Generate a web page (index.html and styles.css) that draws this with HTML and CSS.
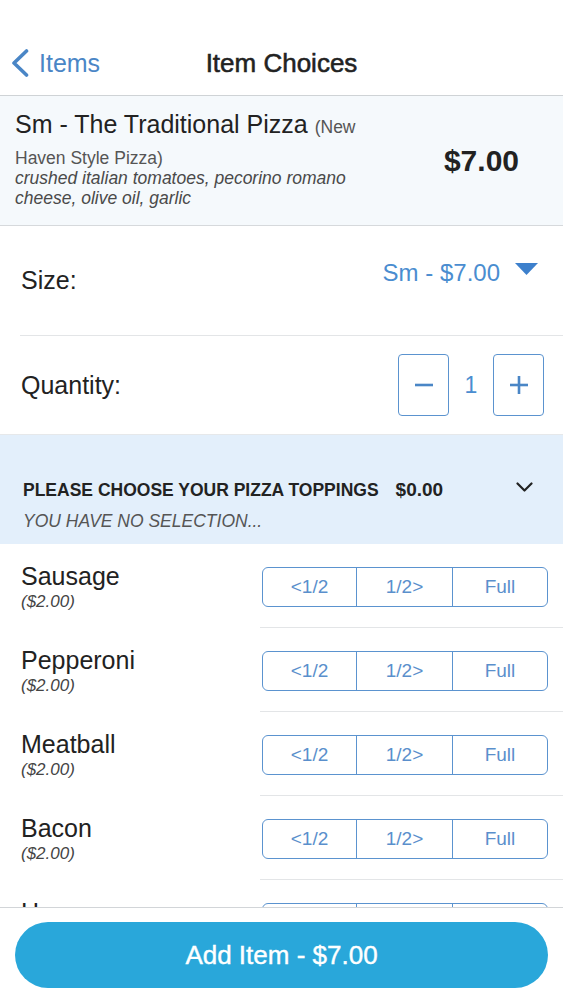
FILE: index.html
```html
<!DOCTYPE html>
<html lang="en">
<head>
<meta charset="utf-8">
<title>Item Choices</title>
<link rel="stylesheet" href="styles.css">
</head>
<body>
<div class="page">
  <header class="nav">
    <a class="back" href="#">
      <svg class="back-icon" width="18" height="28" viewBox="0 0 18 28"><polyline points="15.5,2 3,14 15.5,26" fill="none" stroke="#4a86c6" stroke-width="3.6" stroke-linecap="round" stroke-linejoin="round"/></svg>
      <span>Items</span>
    </a>
    <h1 class="nav-title">Item Choices</h1>
    <div></div>
  </header>

  <section class="item-info">
    <div class="item-text">
      <div class="item-title">Sm - The Traditional Pizza <span class="item-sub">(New Haven Style Pizza)</span></div>
      <div class="item-desc">crushed italian tomatoes, pecorino romano cheese, olive oil, garlic</div>
    </div>
    <div class="item-price">$7.00</div>
  </section>

  <section class="options">
    <div class="opt-row size-row">
      <div class="opt-label">Size:</div>
      <div class="dropdown">
        <span>Sm - $7.00</span>
        <svg class="caret" width="23" height="12" viewBox="0 0 23 12"><polygon points="0,0 23,0 11.5,12" fill="#3d80cc"/></svg>
      </div>
    </div>
    <div class="opt-row qty-row">
      <div class="opt-label">Quantity:</div>
      <div class="stepper">
        <button class="step-btn" type="button"><svg width="18" height="18" viewBox="0 0 18 18"><line x1="0" y1="9" x2="18" y2="9" stroke="#4a86c6" stroke-width="2.6"/></svg></button>
        <span class="qty">1</span>
        <button class="step-btn" type="button"><svg width="18" height="18" viewBox="0 0 18 18"><line x1="0" y1="9" x2="18" y2="9" stroke="#4a86c6" stroke-width="2.6"/><line x1="9" y1="0" x2="9" y2="18" stroke="#4a86c6" stroke-width="2.6"/></svg></button>
      </div>
    </div>
  </section>

  <section class="group-head">
    <div class="group-top">
      <span class="group-name">PLEASE CHOOSE YOUR PIZZA TOPPINGS</span>
      <span class="group-price">$0.00</span>
      <svg class="chev" width="17" height="10" viewBox="0 0 17 10"><polyline points="1.5,1.5 8.5,8.5 15.5,1.5" fill="none" stroke="#222" stroke-width="2.2" stroke-linecap="round" stroke-linejoin="round"/></svg>
    </div>
    <div class="group-note">YOU HAVE NO SELECTION...</div>
  </section>

  <section class="toppings">
    <div class="top-row">
      <div class="top-text"><div class="top-name">Sausage</div><div class="top-price">($2.00)</div></div>
      <div class="top-ctrl"><div class="seg"><span>&lt;1/2</span><span>1/2&gt;</span><span>Full</span></div></div>
    </div>
    <div class="top-row">
      <div class="top-text"><div class="top-name">Pepperoni</div><div class="top-price">($2.00)</div></div>
      <div class="top-ctrl"><div class="seg"><span>&lt;1/2</span><span>1/2&gt;</span><span>Full</span></div></div>
    </div>
    <div class="top-row">
      <div class="top-text"><div class="top-name">Meatball</div><div class="top-price">($2.00)</div></div>
      <div class="top-ctrl"><div class="seg"><span>&lt;1/2</span><span>1/2&gt;</span><span>Full</span></div></div>
    </div>
    <div class="top-row">
      <div class="top-text"><div class="top-name">Bacon</div><div class="top-price">($2.00)</div></div>
      <div class="top-ctrl"><div class="seg"><span>&lt;1/2</span><span>1/2&gt;</span><span>Full</span></div></div>
    </div>
    <div class="top-row">
      <div class="top-text"><div class="top-name">Ham</div><div class="top-price">($2.00)</div></div>
      <div class="top-ctrl"><div class="seg"><span>&lt;1/2</span><span>1/2&gt;</span><span>Full</span></div></div>
    </div>
    <div class="top-row">
      <div class="top-text"><div class="top-name">Mushrooms</div><div class="top-price">($2.00)</div></div>
      <div class="top-ctrl"><div class="seg"><span>&lt;1/2</span><span>1/2&gt;</span><span>Full</span></div></div>
    </div>
  </section>
</div>

<footer class="footer">
  <button class="add-btn" type="button">Add Item - $7.00</button>
</footer>
</body>
</html>
```

FILE: styles.css
```css
* { box-sizing: border-box; }
html, body { margin: 0; padding: 0; }
body {
  font-family: "Liberation Sans", Arial, Helvetica, sans-serif;
  color: #222;
  background: #fff;
  width: 563px;
}
.page { padding-bottom: 100px; }

/* nav */
.nav {
  height: 96px;
  padding-top: 31px;
  border-bottom: 1px solid #cfd3d6;
  display: grid;
  grid-template-columns: 1fr auto 1fr;
  align-items: center;
}
.back {
  display: flex;
  align-items: center;
  gap: 10px;
  padding-left: 11px;
  color: #4a86c6;
  text-decoration: none;
  font-size: 25px;
  line-height: 30px;
}
.back-icon { display: block; }
.nav-title {
  margin: 0;
  font-size: 26px;
  font-weight: normal;
  -webkit-text-stroke: 0.55px #222;
  line-height: 30px;
  color: #222;
}

/* item info */
.item-info {
  height: 130px;
  background: #f5f9fc;
  border-bottom: 1px solid #d6d9dc;
  display: flex;
  align-items: center;
  justify-content: space-between;
  padding: 0 44px 0 15px;
}
.item-text { width: 352px; padding-bottom: 3px; }
.item-title {
  font-size: 25px;
  line-height: 28px;
  color: #222;
}
.item-sub {
  font-size: 17.5px;
  color: #555;
}
.item-desc {
  margin-top: -4px;
  font-size: 17.5px;
  line-height: 20px;
  font-style: italic;
  color: #4a4a4a;
}
.item-price {
  font-size: 30px;
  font-weight: bold;
  color: #222;
}

/* options */
.options { margin-left: 20px; }
.opt-row {
  display: flex;
  align-items: center;
  justify-content: space-between;
}
.opt-label {
  font-size: 25px;
  padding-left: 1px;
  color: #222;
}
.size-row {
  height: 110px;
  border-bottom: 1px solid #e3e5e7;
  padding-right: 25px;
}
.dropdown {
  align-self: flex-start;
  margin-top: 33px;
  display: flex;
  align-items: flex-start;
  gap: 15px;
  font-size: 24px;
  line-height: 28px;
  color: #4a8dd0;
}
.caret { display: block; margin-top: 4px; }
.qty-row {
  height: 98px;
  padding-right: 19px;
}
.stepper {
  display: flex;
  align-items: center;
}
.step-btn {
  width: 51px;
  height: 62px;
  border: 1.5px solid #5b93cf;
  border-radius: 4px;
  background: #fff;
  padding: 0;
  display: flex;
  align-items: center;
  justify-content: center;
}
.step-btn svg { display: block; }
.qty {
  width: 44px;
  text-align: center;
  font-size: 23px;
  color: #4a8dd0;
}

/* group header */
.group-head {
  height: 110px;
  background: #e3effb;
  border-top: 1px solid #e6e8ea;
  padding: 43px 30px 0 23px;
}
.group-top {
  display: flex;
  align-items: center;
  height: 24px;
}
.group-name {
  font-size: 17.5px;
  font-weight: bold;
  color: #222;
}
.group-price {
  margin-left: 17px;
  font-size: 19px;
  font-weight: bold;
  color: #222;
}
.chev { margin-left: auto; margin-top: -7px; display: block; }
.group-note {
  margin-top: 8px;
  font-size: 17.5px;
  line-height: 22px;
  font-style: italic;
  color: #555;
}

/* toppings */
.top-row {
  height: 84px;
  display: flex;
}
.top-text {
  flex: 1;
  padding: 19px 0 0 21px;
}
.top-name {
  font-size: 25px;
  line-height: 26px;
  color: #222;
}
.top-price {
  margin-top: 2px;
  font-size: 17px;
  line-height: 22px;
  font-style: italic;
  color: #444;
}
.top-ctrl {
  width: 303px;
  border-bottom: 1px solid #e3e5e7;
  padding: 3px 15px 0 2px;
  display: flex;
  align-items: center;
}
.seg {
  width: 286px;
  height: 40px;
  border: 1.5px solid #5b93cf;
  border-radius: 6px;
  display: grid;
  grid-template-columns: 93px 96px 1fr;
}
.seg span {
  display: flex;
  align-items: center;
  justify-content: center;
  font-size: 19px;
  color: #5a8fcc;
}
.seg span + span { border-left: 1.5px solid #5b93cf; }

/* footer */
.footer {
  position: fixed;
  left: 0;
  right: 0;
  bottom: 0;
  height: 93px;
  background: #fff;
  border-top: 1px solid #d2d5d8;
  padding: 14px 15px 0;
}
.add-btn {
  width: 100%;
  height: 66px;
  border: none;
  border-radius: 33px;
  background: #29a7da;
  color: #fff;
  font-family: "Liberation Sans", Arial, Helvetica, sans-serif;
  font-size: 26px;
  -webkit-text-stroke: 0.4px #fff;
}
```
